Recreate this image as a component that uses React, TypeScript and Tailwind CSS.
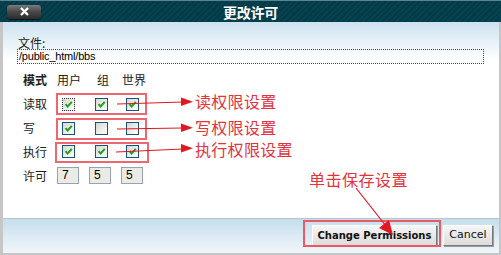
import React from "react";

const cjk = { fontFamily: '"Noto Sans CJK SC", "Noto Sans", sans-serif' };

function Check({ checked, focus }: { checked: boolean; focus?: boolean }) {
  return (
    <div
      className={
        "w-[13px] h-[13px] border flex items-center justify-center bg-[linear-gradient(135deg,#d8d8d0,#ffffff)] " +
        (focus ? "border-dotted border-[#333333]" : "border-solid border-[#1c5180]")
      }
    >
      {checked && (
        <svg width="9" height="9" viewBox="0 0 9 9">
          <path d="M1.5 4.2 L3.6 6.5 L7.8 1.8" fill="none" stroke="#21a121" strokeWidth="2" />
        </svg>
      )}
    </div>
  );
}

function Num({ v }: { v: string }) {
  return (
    <div className="w-[22px] h-[17px] border border-[#8fa3bd] bg-[#ecebe3] pl-[4px] text-[12px] leading-[15px] text-black font-['Liberation_Sans',sans-serif]">
      {v}
    </div>
  );
}

export default function App() {
  const rows: { label: string; vals: boolean[] }[] = [
    { label: "读取", vals: [true, true, true] },
    { label: "写", vals: [true, false, false] },
    { label: "执行", vals: [true, true, true] },
  ];
  const offs = ["ml-[5px]", "ml-[6px]", "ml-[5px]"];

  return (
    <div className="relative w-[501px] h-[255px] flex flex-col bg-white overflow-hidden">
      {/* title bar */}
      <div className="h-[22px] border-t border-[#5a8496] grid grid-cols-[1fr_auto_1fr] items-center bg-[repeating-linear-gradient(135deg,#023a48_0px,#023a48_2px,#07434f_2px,#07434f_4px)]">
        <div className="pl-[7px] flex">
          <div className="w-[34px] h-[14px] rounded-[3px] bg-[linear-gradient(#7c7c7c,#4a4a4a_45%,#2c2c2c)] shadow-[0_1px_1px_rgba(0,0,0,0.6)] flex items-center justify-center">
            <svg width="9" height="9" viewBox="0 0 9 9">
              <path d="M1 1 L8 8 M8 1 L1 8" stroke="#ffffff" strokeWidth="2.4" />
            </svg>
          </div>
        </div>
        <div style={cjk} className="text-white font-bold text-[14px] leading-[14px] tracking-[-0.2px]">
          更改许可
        </div>
        <div />
      </div>

      <div className="flex-1 flex flex-col border-l-[3px] border-r-2 border-b-2 border-[#c6c6c6]">
        {/* body */}
        <div className="flex-1 bg-[linear-gradient(#cde2f0,#ffffff_38px)] pt-[15px]">
          <div style={cjk} className="pl-[15px] text-[12px] leading-[12px] h-[12px] text-[#222]">
            文件:
          </div>
          <div className="ml-[14px] w-[467px] h-[15px] border border-dotted border-[#444] pl-[1px] text-[11px] leading-[13px] tracking-[-0.2px] text-black font-['Liberation_Sans',sans-serif]">
            /public_html/bbs
          </div>

          <div
            style={cjk}
            className="mt-[4px] ml-[20px] grid grid-cols-[34px_32px_32px_32px] grid-rows-[24px_24px_24px_23px_25px] items-center text-[12px] text-[#222]"
          >
            <div className="font-bold">模式</div>
            <div>用户</div>
            <div className="ml-[8px]">组</div>
            <div className="ml-[1px]">世界</div>

            {rows.map((r, i) => (
              <React.Fragment key={r.label}>
                <div>{r.label}</div>
                {r.vals.map((c, j) => (
                  <div key={j} className={offs[j]}>
                    <Check checked={c} focus={i === 0 && j === 0} />
                  </div>
                ))}
              </React.Fragment>
            ))}

            <div>许可</div>
            <Num v="7" />
            <Num v="5" />
            <Num v="5" />
          </div>
        </div>

        {/* footer */}
        <div className="h-[35px] border-t border-[#b9c3cb] bg-[linear-gradient(#c6deed,#f1f6fa)] flex justify-end items-start pt-[6px] pr-[6px] gap-[6px]">
          <button className="w-[125px] h-[21px] bg-[linear-gradient(#f6f6f6,#dcdcdc)] border border-t-white border-l-white border-r-[#7a7a7a] border-b-[#7a7a7a] shadow-[1px_1px_0_#9a9a9a] text-[10px] font-bold text-[#111] font-['DejaVu_Sans',sans-serif]">
            Change Permissions
          </button>
          <button className="w-[50px] h-[21px] bg-[linear-gradient(#f6f6f6,#dcdcdc)] border border-t-white border-l-white border-r-[#7a7a7a] border-b-[#7a7a7a] shadow-[1px_1px_0_#9a9a9a] text-[11px] text-[#111] font-['DejaVu_Sans',sans-serif]">
            Cancel
          </button>
        </div>
      </div>

      {/* annotations */}
      <div className="absolute left-[56px] top-[93px] w-[91px] h-[22px] border-2 border-[#ee6670]" />
      <div className="absolute left-[56px] top-[118px] w-[91px] h-[22px] border-2 border-[#ee6670]" />
      <div className="absolute left-[55px] top-[142px] w-[94px] h-[21px] border-2 border-[#ee6670]" />
      <div className="absolute left-[303px] top-[220px] w-[138px] h-[27px] border-2 border-[#ea5a64]" />

      <svg className="absolute inset-0 pointer-events-none" width="501" height="255">
        <g stroke="#e01822" strokeWidth="1.2">
          <line x1="117" y1="104" x2="183" y2="102" />
          <line x1="117" y1="129" x2="183" y2="128" />
          <line x1="116" y1="152" x2="183" y2="149" />
          <line x1="356" y1="188" x2="386" y2="226" />
        </g>
        <g fill="#e01822">
          <polygon points="181,97.5 193,101.7 181,106" />
          <polygon points="181,123.5 193,127.8 181,132" />
          <polygon points="181,144 193,148.3 181,152.5" />
          <polygon points="393,235 379,228 389,220" />
        </g>
      </svg>

      <div style={cjk} className="absolute left-[195px] top-[91px] text-[16px] leading-[20px] tracking-[0.3px] text-[#e6323c]">
        读权限设置
      </div>
      <div style={cjk} className="absolute left-[195px] top-[117px] text-[16px] leading-[20px] tracking-[0.3px] text-[#e6323c]">
        写权限设置
      </div>
      <div style={cjk} className="absolute left-[195px] top-[139px] text-[16px] leading-[20px] tracking-[0.3px] text-[#e6323c]">
        执行权限设置
      </div>
      <div style={cjk} className="absolute left-[309px] top-[169px] text-[16px] leading-[20px] tracking-[0.5px] text-[#e6323c]">
        单击保存设置
      </div>
    </div>
  );
}
